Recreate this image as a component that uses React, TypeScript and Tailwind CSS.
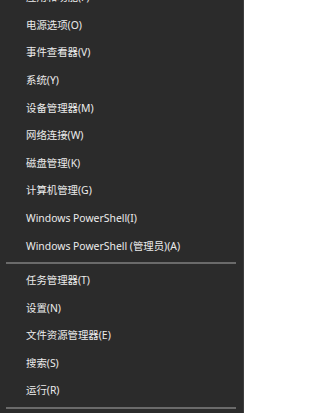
import React from 'react';

const groups: string[][] = [
  [
    '应用和功能(F)',
    '电源选项(O)',
    '事件查看器(V)',
    '系统(Y)',
    '设备管理器(M)',
    '网络连接(W)',
    '磁盘管理(K)',
    '计算机管理(G)',
    'Windows PowerShell(I)',
    'Windows PowerShell (管理员)(A)',
  ],
  ['任务管理器(T)', '设置(N)', '文件资源管理器(E)', '搜索(S)', '运行(R)'],
];

const App: React.FC = () => {
  return (
    <div
      className="w-[252px] h-[413px] bg-white flex overflow-hidden"
      style={{ fontFamily: '"Noto Sans", "Noto Sans CJK SC", sans-serif' }}
    >
      <div className="w-[244px] h-full bg-[#2b2b2b] border-r border-[#3c3c3c] overflow-hidden">
        <div className="mt-[-16.4px] flex flex-col">
          {groups.map((items, gi) => (
            <div key={gi} className="flex flex-col">
              {items.map((label) => (
                <div
                  key={label}
                  className="h-[27.6px] flex items-center pl-[26px] text-[10.4px] text-[#ebebeb] leading-none whitespace-nowrap"
                >
                  {label}
                </div>
              ))}
              <div className="py-[2.4px] pl-[6px] pr-[7px]">
                <div className="h-[2px] bg-[#6a6a6a]" />
              </div>
            </div>
          ))}
        </div>
      </div>
    </div>
  );
};

export default App;
